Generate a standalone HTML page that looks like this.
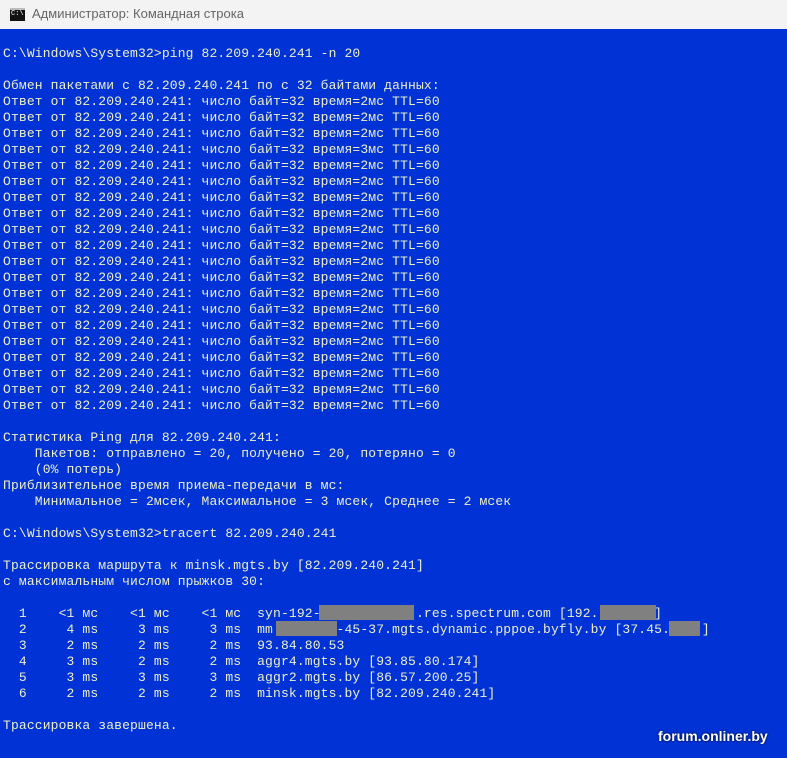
<!DOCTYPE html>
<html><head><meta charset="utf-8"><style>
html,body{margin:0;padding:0;width:787px;height:758px;overflow:hidden;background:#0032d5;}
#tb{position:absolute;left:0;top:0;width:787px;height:29px;background:#f3f3f3;}
#tb .ic{position:absolute;left:10px;top:8px;width:15px;height:11px;background:#111;border-top:2px solid #bbb;}
#tb .ic span{position:absolute;left:1px;top:0;font:7px "Liberation Mono",monospace;color:#fff;line-height:9px;}
#tb .t{position:absolute;left:32px;top:6px;font:13px "Liberation Sans",sans-serif;color:#666;}
pre{position:absolute;left:3px;top:46px;margin:0;font:13px/16px "Liberation Mono","DejaVu Sans Mono",monospace;color:#eef0c4;letter-spacing:0.14px;}
.r{position:absolute;background:#808080;}
#wm{position:absolute;left:658px;top:728px;font:bold 14px "Liberation Sans",sans-serif;color:#fff;text-shadow:0 0 2px #000;}
</style></head><body>
<div id="tb"><div class="ic"><span>C:\</span></div><div class="t">Администратор: Командная строка</div></div>
<pre>C:\Windows\System32&gt;ping 82.209.240.241 -n 20

Обмен пакетами с 82.209.240.241 по с 32 байтами данных:
Ответ от 82.209.240.241: число байт=32 время=2мс TTL=60
Ответ от 82.209.240.241: число байт=32 время=2мс TTL=60
Ответ от 82.209.240.241: число байт=32 время=2мс TTL=60
Ответ от 82.209.240.241: число байт=32 время=3мс TTL=60
Ответ от 82.209.240.241: число байт=32 время=2мс TTL=60
Ответ от 82.209.240.241: число байт=32 время=2мс TTL=60
Ответ от 82.209.240.241: число байт=32 время=2мс TTL=60
Ответ от 82.209.240.241: число байт=32 время=2мс TTL=60
Ответ от 82.209.240.241: число байт=32 время=2мс TTL=60
Ответ от 82.209.240.241: число байт=32 время=2мс TTL=60
Ответ от 82.209.240.241: число байт=32 время=2мс TTL=60
Ответ от 82.209.240.241: число байт=32 время=2мс TTL=60
Ответ от 82.209.240.241: число байт=32 время=2мс TTL=60
Ответ от 82.209.240.241: число байт=32 время=2мс TTL=60
Ответ от 82.209.240.241: число байт=32 время=2мс TTL=60
Ответ от 82.209.240.241: число байт=32 время=2мс TTL=60
Ответ от 82.209.240.241: число байт=32 время=2мс TTL=60
Ответ от 82.209.240.241: число байт=32 время=2мс TTL=60
Ответ от 82.209.240.241: число байт=32 время=2мс TTL=60
Ответ от 82.209.240.241: число байт=32 время=2мс TTL=60

Статистика Ping для 82.209.240.241:
    Пакетов: отправлено = 20, получено = 20, потеряно = 0
    (0% потерь)
Приблизительное время приема-передачи в мс:
    Минимальное = 2мсек, Максимальное = 3 мсек, Среднее = 2 мсек

C:\Windows\System32&gt;tracert 82.209.240.241

Трассировка маршрута к minsk.mgts.by [82.209.240.241]
с максимальным числом прыжков 30:

  1    &lt;1 мс    &lt;1 мс    &lt;1 мс  syn-192-            .res.spectrum.com [192.       ]
  2     4 ms     3 ms     3 ms  mm        -45-37.mgts.dynamic.pppoe.byfly.by [37.45.    ]
  3     2 ms     2 ms     2 ms  93.84.80.53
  4     3 ms     2 ms     2 ms  aggr4.mgts.by [93.85.80.174]
  5     3 ms     3 ms     3 ms  aggr2.mgts.by [86.57.200.25]
  6     2 ms     2 ms     2 ms  minsk.mgts.by [82.209.240.241]

Трассировка завершена.</pre>
<div class="r" style="left:319px;top:605px;width:95px;height:15px"></div>
<div class="r" style="left:600px;top:605px;width:56px;height:15px"></div>
<div class="r" style="left:276px;top:621px;width:61px;height:15px"></div>
<div class="r" style="left:669px;top:621px;width:31px;height:15px"></div>
<div id="wm">forum.onliner.by</div>
</body></html>
